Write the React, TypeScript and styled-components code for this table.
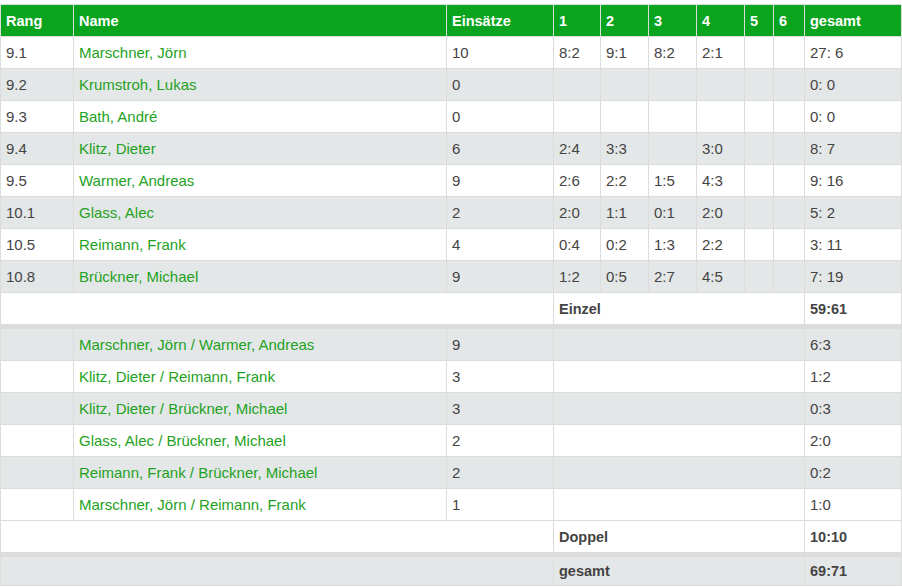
import styled, { createGlobalStyle } from 'styled-components';

const GlobalStyle = createGlobalStyle`
  body {
    margin: 0;
    background: #ffffff;
    font-family: 'Liberation Sans', Arial, sans-serif;
  }
`;

const Table = styled.table`
  margin-top: 4px;
  width: 901px;
  table-layout: fixed;
  border-collapse: collapse;
  font-size: 15px;
  color: #444;
`;

const HeadRow = styled.tr`
  background-color: #0aa41e;
`;

const HeadCell = styled.th`
  height: 31px;
  padding: 0 5px;
  border: 1px solid #dcdcdc;
  color: #ffffff;
  font-weight: bold;
  font-size: 14.5px;
  text-align: left;
`;

const Row = styled.tr<{ $alt?: boolean; $sep?: boolean; $short?: boolean }>`
  background-color: ${(p) => (p.$alt ? '#e4e7e8' : '#ffffff')};
  border-top: ${(p) => (p.$sep ? '5px solid #dcdcdc' : 'none')};

  td {
    height: ${(p) => (p.$short ? '28px' : '31px')};
  }
`;

const Cell = styled.td<{ $green?: boolean; $bold?: boolean }>`
  padding: 0 5px;
  border: 1px solid #dcdcdc;
  white-space: nowrap;
  color: ${(p) => (p.$green ? '#1ea21e' : '#444')};
  font-weight: ${(p) => (p.$bold ? 'bold' : 'normal')};
  font-size: ${(p) => (p.$bold ? '14.5px' : '15px')};
`;

type Player = { rang: string; name: string; einsaetze: string; games: string[]; total: string };

const einzel: Player[] = [
  { rang: '9.1', name: 'Marschner, Jörn', einsaetze: '10', games: ['8:2', '9:1', '8:2', '2:1', '', ''], total: '27: 6' },
  { rang: '9.2', name: 'Krumstroh, Lukas', einsaetze: '0', games: ['', '', '', '', '', ''], total: '0: 0' },
  { rang: '9.3', name: 'Bath, André', einsaetze: '0', games: ['', '', '', '', '', ''], total: '0: 0' },
  { rang: '9.4', name: 'Klitz, Dieter', einsaetze: '6', games: ['2:4', '3:3', '', '3:0', '', ''], total: '8: 7' },
  { rang: '9.5', name: 'Warmer, Andreas', einsaetze: '9', games: ['2:6', '2:2', '1:5', '4:3', '', ''], total: '9: 16' },
  { rang: '10.1', name: 'Glass, Alec', einsaetze: '2', games: ['2:0', '1:1', '0:1', '2:0', '', ''], total: '5: 2' },
  { rang: '10.5', name: 'Reimann, Frank', einsaetze: '4', games: ['0:4', '0:2', '1:3', '2:2', '', ''], total: '3: 11' },
  { rang: '10.8', name: 'Brückner, Michael', einsaetze: '9', games: ['1:2', '0:5', '2:7', '4:5', '', ''], total: '7: 19' },
];

const doppel = [
  { name: 'Marschner, Jörn / Warmer, Andreas', einsaetze: '9', total: '6:3' },
  { name: 'Klitz, Dieter / Reimann, Frank', einsaetze: '3', total: '1:2' },
  { name: 'Klitz, Dieter / Brückner, Michael', einsaetze: '3', total: '0:3' },
  { name: 'Glass, Alec / Brückner, Michael', einsaetze: '2', total: '2:0' },
  { name: 'Reimann, Frank / Brückner, Michael', einsaetze: '2', total: '0:2' },
  { name: 'Marschner, Jörn / Reimann, Frank', einsaetze: '1', total: '1:0' },
];

const widths = [73, 373, 107, 47, 48, 48, 48, 29, 31, 97];

export default function App() {
  return (
    <>
      <GlobalStyle />
      <Table>
        <colgroup>
          {widths.map((w, i) => (
            <col key={i} style={{ width: w }} />
          ))}
        </colgroup>
        <thead>
          <HeadRow>
            <HeadCell>Rang</HeadCell>
            <HeadCell>Name</HeadCell>
            <HeadCell>Einsätze</HeadCell>
            <HeadCell>1</HeadCell>
            <HeadCell>2</HeadCell>
            <HeadCell>3</HeadCell>
            <HeadCell>4</HeadCell>
            <HeadCell>5</HeadCell>
            <HeadCell>6</HeadCell>
            <HeadCell>gesamt</HeadCell>
          </HeadRow>
        </thead>
        <tbody>
          {einzel.map((p, i) => (
            <Row key={p.rang} $alt={i % 2 === 1}>
              <Cell>{p.rang}</Cell>
              <Cell $green>{p.name}</Cell>
              <Cell>{p.einsaetze}</Cell>
              {p.games.map((g, j) => (
                <Cell key={j}>{g}</Cell>
              ))}
              <Cell>{p.total}</Cell>
            </Row>
          ))}
          <Row>
            <Cell colSpan={3} />
            <Cell colSpan={6} $bold>Einzel</Cell>
            <Cell $bold>59:61</Cell>
          </Row>
          {doppel.map((d, i) => (
            <Row key={d.name} $alt={i % 2 === 0} $sep={i === 0}>
              <Cell />
              <Cell $green>{d.name}</Cell>
              <Cell>{d.einsaetze}</Cell>
              <Cell colSpan={6} />
              <Cell>{d.total}</Cell>
            </Row>
          ))}
          <Row>
            <Cell colSpan={3} />
            <Cell colSpan={6} $bold>Doppel</Cell>
            <Cell $bold>10:10</Cell>
          </Row>
          <Row $alt $sep $short>
            <Cell colSpan={3} />
            <Cell colSpan={6} $bold>gesamt</Cell>
            <Cell $bold>69:71</Cell>
          </Row>
        </tbody>
      </Table>
    </>
  );
}
